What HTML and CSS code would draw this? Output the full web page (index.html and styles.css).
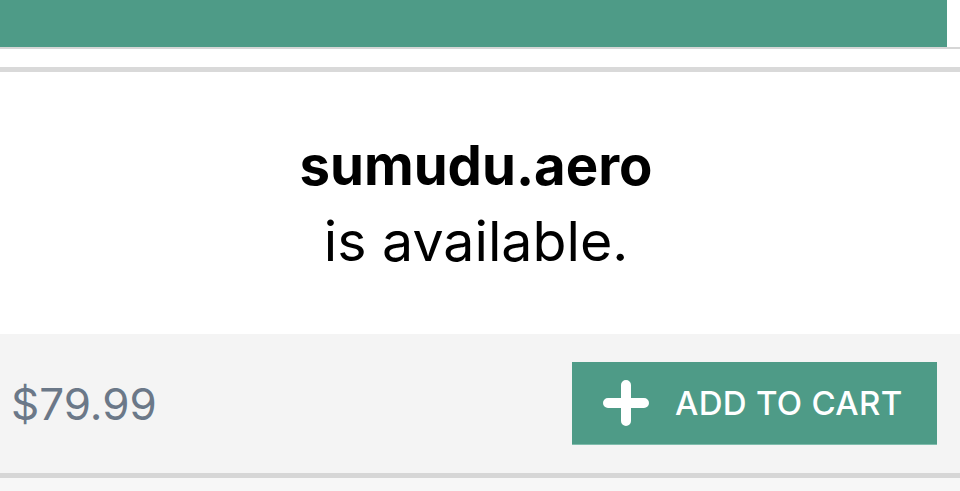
FILE: index.html
```html
<!DOCTYPE html>
<html lang="en">
<head>
<meta charset="utf-8">
<title>Domain available</title>
<link rel="stylesheet" href="styles.css">
</head>
<body>
  <div class="topbar-wrap">
    <div class="topbar"></div>
  </div>
  <div class="spacer"></div>
  <section class="result">
    <div class="result-body">
      <div class="domain">sumudu.aero</div>
      <div class="status">is available.</div>
    </div>
    <div class="result-footer">
      <div class="price">$79.99</div>
      <button class="cart-btn" type="button">
        <svg class="plus" width="46" height="46" viewBox="0 0 46 46" aria-hidden="true">
          <path d="M23 5 V41 M5 23 H41" stroke="#ffffff" stroke-width="10" stroke-linecap="round" fill="none"/>
        </svg>
        <span class="cart-label">ADD TO CART</span>
      </button>
    </div>
  </section>
  <div class="below"></div>
</body>
</html>
```

FILE: styles.css
```css
* { box-sizing: border-box; }

html, body {
  margin: 0;
  padding: 0;
  background: #ffffff;
  font-family: Inter, "Noto Sans", "Liberation Sans", sans-serif;
  overflow: hidden;
}

.topbar-wrap {
  border-bottom: 2px solid #d6d6d6;
}

.topbar {
  height: 47px;
  width: calc(100% - 13px);
  background: #4e9b87;
}

.spacer {
  height: 18px;
  background: #ffffff;
}

.result {
  border-top: 5px solid #d9d9d9;
  border-bottom: 5px solid #d6d6d6;
}

.result-body {
  height: 262px;
  display: flex;
  flex-direction: column;
  align-items: center;
  justify-content: center;
  padding-right: 8px;
  color: #000000;
  font-size: 54px;
  line-height: 75px;
}

.domain {
  font-weight: 700;
  font-size: 54.5px;
}

.status {
  font-weight: 400;
  font-size: 55.5px;
}

.result-footer {
  height: 139px;
  background: #f4f4f4;
  display: flex;
  align-items: center;
  justify-content: space-between;
  padding: 0 23px 0 11px;
}

.price {
  font-size: 44px;
  color: #6b7888;
  font-weight: 400;
}

.cart-btn {
  width: 365px;
  height: 83px;
  border: none;
  border-bottom: 1px solid #7fbcac;
  background: #4e9b87;
  color: #ffffff;
  display: flex;
  align-items: center;
  padding: 0 0 0 31px;
  gap: 26px;
  font-family: Inter, "Noto Sans", "Liberation Sans", sans-serif;
  font-size: 33px;
  font-weight: 500;
  letter-spacing: 0.3px;
  cursor: pointer;
}

.plus {
  flex: none;
  display: block;
}

.below {
  height: 20px;
  background: #f7f7f7;
}
```
